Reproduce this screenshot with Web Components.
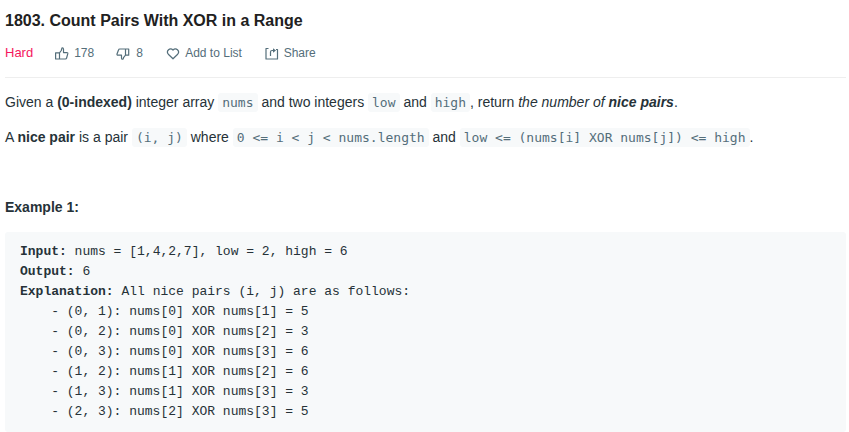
<!DOCTYPE html>
<html lang="en"><head><meta charset="utf-8"><title>Count Pairs With XOR in a Range</title>
<style>
body{margin:0;background:#fff;overflow:hidden}
</style></head><body>
<problem-page></problem-page>
<script>
const define=(name,html)=>customElements.define(name,class extends HTMLElement{
  constructor(){super();this.attachShadow({mode:'open'}).innerHTML=html;}
});
define('code-chip',`<style>:host{font:13px/18px "DejaVu Sans Mono",monospace;color:#546e7a;background:#f7f9fa;padding:2px 4px;border-radius:3px;white-space:nowrap}</style><slot></slot>`);
define('tool-item',`<style>:host{display:flex;align-items:center;gap:5px;font-size:12px;line-height:18px;color:#546e7a;white-space:nowrap}::slotted(svg){display:block;width:14px;height:14px;margin-top:2px;fill:none;stroke:#546e7a;stroke-width:1.2;stroke-linejoin:round}</style><slot name="icon"></slot><span><slot></slot></span>`);
define('problem-header',`<style>
:host{display:block;padding-top:9px;border-bottom:1px solid #eee;height:68px}
h1{margin:0;font-size:16px;line-height:23px;color:#212121;font-weight:bold}
nav{display:flex;align-items:center;margin-top:11px;height:20px}
.hard{font-size:13px;line-height:18px;margin-top:-1px;color:#f5165d;margin-right:22px}
</style><h1>1803. Count Pairs With XOR in a Range</h1>
<nav><span class="hard">Hard</span>
<tool-item style="width:61px"><svg slot="icon" viewBox="0 0 14 14"><path d="M4.500 5.800H.6v6.200h9.800q.9 0 1.200-1l1.200-4.300q.2-1.100-.9-1.100H8.500V2.300Q8.200.4 6.900 1.100L6.300 3.500 4.500 5.800V12"/></svg>178</tool-item>
<tool-item style="width:50px;gap:6px"><svg slot="icon" viewBox="0 0 14 14"><path d="M9.500 8.200h3.200V2H3.700q-.9 0-1.200 1L1 7q-.3 1.200 1 1.200h3.500v2.800q.2 1.800 1.600 1L7.700 10.300 9.500 8.200V2"/></svg>8</tool-item>
<tool-item style="width:98.500px"><svg slot="icon" viewBox="0 0 14 14"><path d="M7 11.800 2.300 7.200C-.3 4.200 4 -.2 7 3.100c3-3.300 7.300 1.100 4.700 4.100z"/></svg>Add to List</tool-item>
<tool-item><svg slot="icon" viewBox="0 0 14 14"><path d="M3.500 1.500H1v10.500h11.500V2.500H11M5.500 9V5q0-1.500 1.500-1.500H8.500"/><path d="M8 1.200 11 3.500 8 5.800z" fill="#546e7a" stroke="none"/></svg>Share</tool-item></nav>`);
define('sample-block',`<style>:host{display:block;background:#f7f9fa;padding:10px 15px;height:200px;box-sizing:border-box;border-radius:3px}pre{margin:0;font:13px/20px "Liberation Mono","Courier New",monospace;color:#263238}</style><pre><slot></slot></pre>`);
define('problem-page',`<style>
:host{display:block;box-sizing:border-box;width:849px;height:432px;overflow:hidden;padding:0 3px 0 5px;font-family:"Liberation Sans",Arial,sans-serif;color:#263238}
p{margin:0 0 15px;font-size:14px;line-height:20px;height:20px;white-space:nowrap}
.first{margin-top:14px}
</style><problem-header></problem-header>
<p class="first">Given a <b>(0-indexed)</b> integer array <code-chip>nums</code-chip> and two integers <code-chip>low</code-chip> and <code-chip>high</code-chip>, return <i>the number of <b>nice pairs</b></i>.</p>
<p>A <b>nice pair</b> is a pair <code-chip>(i, j)</code-chip> where <code-chip>0 &lt;= i &lt; j &lt; nums.length</code-chip> and <code-chip>low &lt;= (nums[i] XOR nums[j]) &lt;= high</code-chip>.</p>
<p></p><p><b>Example 1:</b></p>
<sample-block><div><b>Input:</b> nums = [1,4,2,7], low = 2, high = 6</div><div><b>Output:</b> 6</div><div><b>Explanation:</b> All nice pairs (i, j) are as follows:</div><div>    - (0, 1): nums[0] XOR nums[1] = 5</div><div>    - (0, 2): nums[0] XOR nums[2] = 3</div><div>    - (0, 3): nums[0] XOR nums[3] = 6</div><div>    - (1, 2): nums[1] XOR nums[2] = 6</div><div>    - (1, 3): nums[1] XOR nums[3] = 3</div><div>    - (2, 3): nums[2] XOR nums[3] = 5</div></sample-block>`);
</script></body></html>
